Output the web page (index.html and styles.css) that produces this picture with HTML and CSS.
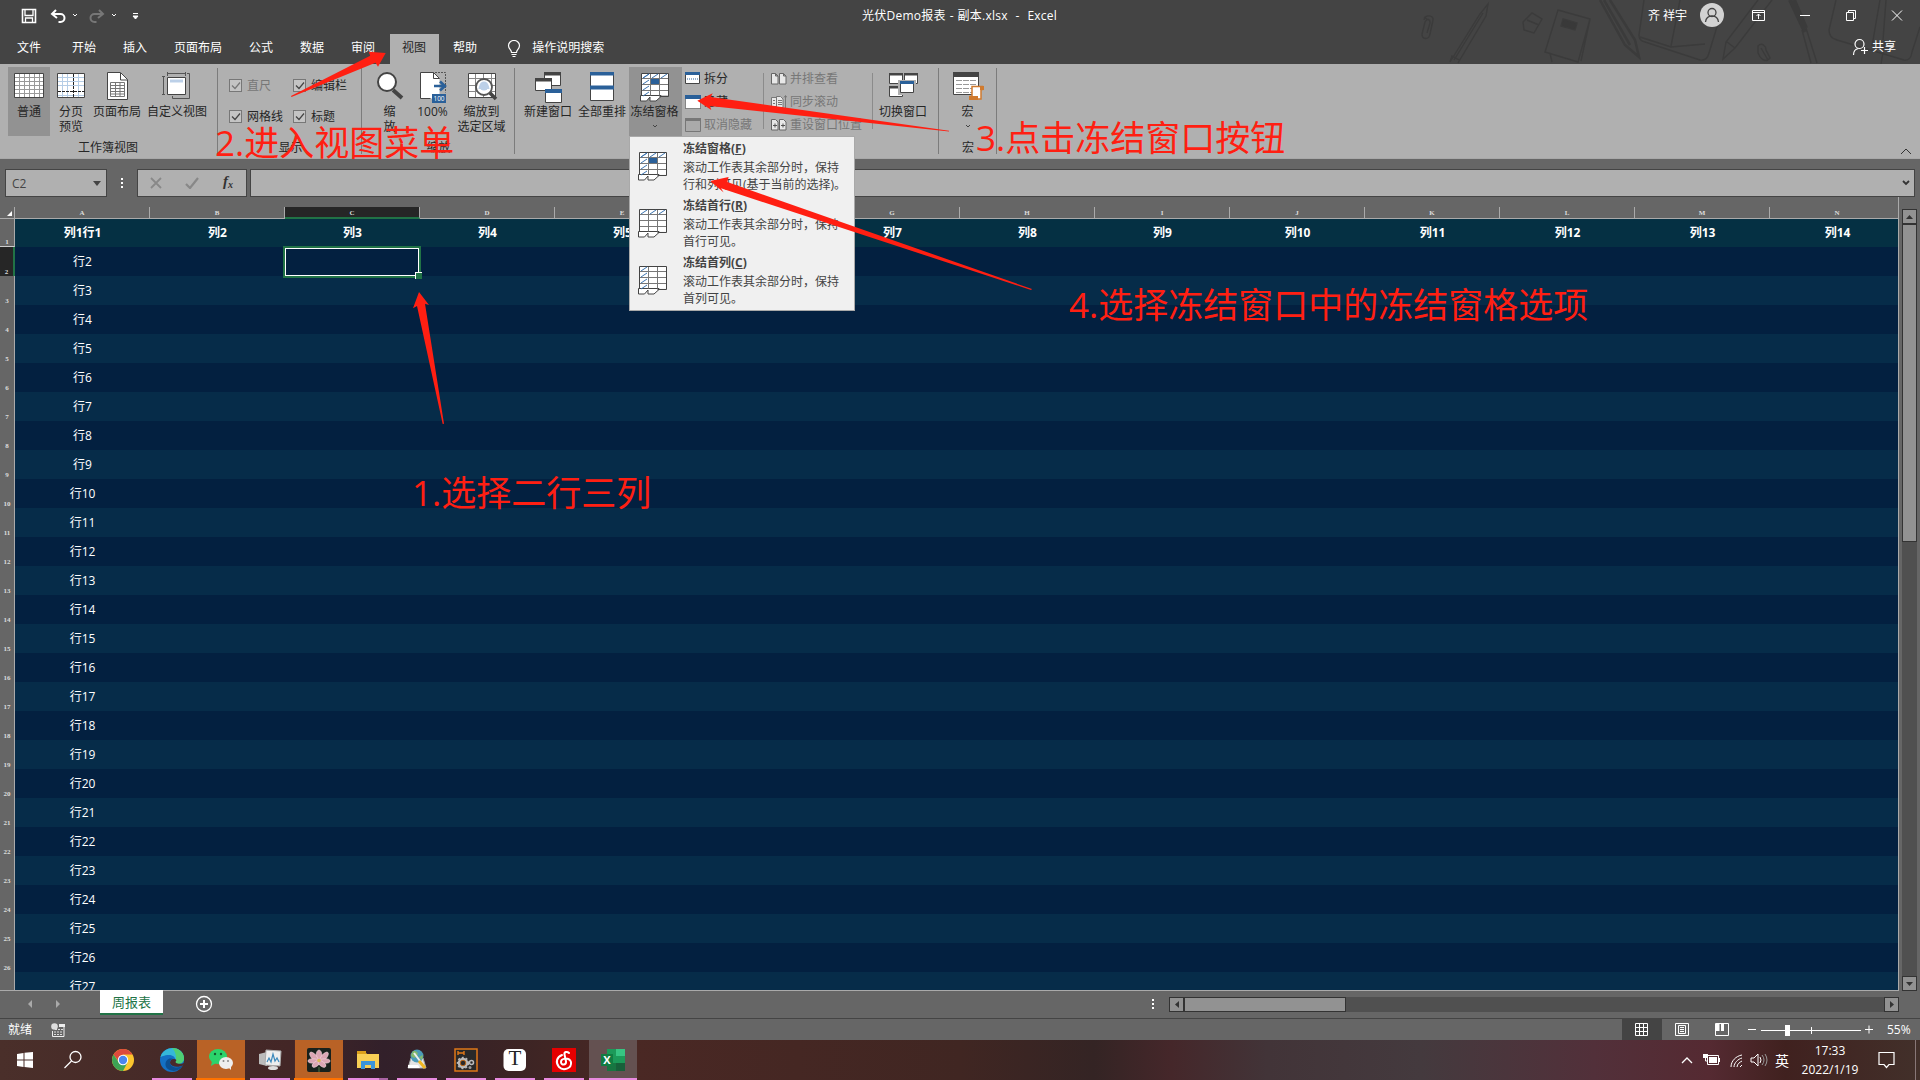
FILE: index.html
```html
<!DOCTYPE html>
<html lang="zh-CN">
<head>
<meta charset="utf-8">
<title>光伏Demo报表 - 副本.xlsx - Excel</title>
<link rel="stylesheet" href="styles.css">
</head>
<body>
<svg width="0" height="0" class="defs">
  <defs>
    <g id="freeze-grid">
      <path d="M1.5 1.5h27v22h-27z" fill="#fff"/>
      <path d="M.500 23.500v5.500h6l3.500-4v4h6l5-4.500v-1z" fill="#fff" stroke="#444" stroke-width="1"/>
      <path d="M1.500 6.500h27M1.500 12.500h27M1.500 18.500h27M10.500 1.500v22M19.500 1.500v22" stroke="#777" fill="none"/>
      <path d="M1.500 1.500h27v23h-9M1.500 1.500v22" stroke="#444" fill="none"/>
    </g>
    <path id="top-hatch" d="M3 6l6-4M12 6l6-4M21 6l6-4" stroke="#3c74b0" fill="none"/>
    <path id="left-hatch" d="M3 6l6-4M3 12l6-4M3 18l6-4M3 24l6-4" stroke="#3c74b0" fill="none"/>
  </defs>
</svg>
<div class="screen">
  <header class="top">
    <svg class="doodles" width="520" height="64" viewBox="1400 0 520 64" fill="none" stroke="#3b3b3b" stroke-width="1.4">
      <path d="M1424 20c1-6 10-5 9 0l-3 14c-1 6-8 6-8 0l3-12c2-4 5-3 5 1l-3 10M1424 17l4 3"/>
      <path d="M1450 62l30-48 8-10-2 12-28 47M1454 60l29-47M1450 62l2-6 7 4"/>
      <path d="M1523 22l9-9 10 6-8 14-10-3zM1527 20l12 5"/>
      <path d="M1558 10l32 9-12 43-33-10zM1590 19l-9 42M1550 53l2 9"/><path d="M1563 19l14 4-2 7-14-4z" fill="#393939"/>
      <path d="M1600 0l25 45 14 12-4-17-25-40M1604 0l26 45" stroke-width="2.500"/>
      <path d="M1644 0l-5 35q0 6 6 7l55 18q7 1 9-7l10-33M1680 0l-9 46M1640 37l31 10 34-3"/>
      <path d="M1758 0l-32 42-3 17 12-11 37-48M1727 42l8 6"/><path d="M1758 46c4-4 8 0 8 4l4 8c-5 6-10 0-12-5zM1761 48l7 12"/>
      <path d="M1790 0l15 32M1794 0l12 28" stroke-width="4"/><path d="M1802 30l9 33M1806 28l11 35M1885 40l-4 24"/>
      <path d="M1836 0l-7 30q0 8 8 10l67 20q7 1 8-8l8-25M1880 0l-8 46M1886 0l-3 40"/>
    </svg>
    <div class="titlebar">
      <div class="quick">
        <svg width="150" height="30" viewBox="0 0 150 30" fill="none" stroke="#fff">
          <path d="M22.500 10.500h13v13h-13z" stroke-width="1.600"/><path d="M25 10.500v6h8v-6M25.500 23v-4h7v4" stroke-width="1.300"/>
          <path d="M56 11l-4 4 5 4M52.500 15h8a4 4 0 010 8h-2" stroke-width="2"/><path d="M73 15l2 2 2-2M112 15l2 2 2-2"/>
          <g stroke="#777"><path d="M99 11l4 4-5 4M102.500 15h-8a4 4 0 000 8h2" stroke-width="2"/></g>
          <path d="M133 14.500h5"/><path d="M133 17l2.500 3 2.500-3z" fill="#fff"/>
        </svg>
      </div>
      <div class="doc-title">光伏Demo报表 - 副本.xlsx&nbsp; -&nbsp; Excel</div>
      <div class="account"><span>齐 祥宇</span>
        <svg width="24" height="24" viewBox="0 0 24 24"><circle cx="12" cy="12" r="12" fill="#d2d2d2"/><circle cx="12" cy="9.500" r="4" fill="none" stroke="#444" stroke-width="1.300"/><path d="M5.500 19c1-8 12-8 13 0" fill="none" stroke="#444" stroke-width="1.300"/></svg>
      </div>
      <svg class="win-controls" width="160" height="30" viewBox="1744 0 160 30" fill="none" stroke="#fff">
        <path d="M1752.500 10.500h12v10h-12zM1752.500 12.500h12M1758.500 19v-5M1756.500 16l2-2 2 2"/>
        <path d="M1800 15.500h10M1846.500 12.500h7v8h-7zM1848.500 12v-1.500h7v8h-1.500M1892 10.500l10 10M1902 10.500l-10 10"/>
      </svg>
    </div>
    <nav class="tabs">
      <a>文件</a><a>开始</a><a>插入</a><a>页面布局</a><a>公式</a><a>数据</a><a>审阅</a><a class="active">视图</a><a>帮助</a>
      <svg class="bulb" width="14" height="18" viewBox="0 0 14 18" fill="none" stroke="#fff" stroke-width="1.200"><path d="M4.500 12.500c0-3-3-3.500-3-7a5.500 5 0 0111 0c0 3.500-3 4-3 7zM4.500 14.500h5M5.500 16.500h3"/></svg>
      <span class="tell">操作说明搜索</span>
      <span class="share"><svg width="17" height="18" viewBox="0 0 17 18" fill="none" stroke="#fff" stroke-width="1.200"><circle cx="7.500" cy="6" r="4.500"/><path d="M1.500 17c0-4 2-6 5-6.500M12.500 9v7M9 12.500h7"/></svg>共享</span>
    </nav>
  </header>

  <section class="ribbon">
    <div class="group g-views">
      <div class="tools">
        <div class="btn pressed w42"><svg width="30" height="30" viewBox="0 0 30 30"><path d="M.500 1.500h29v24H.500z" fill="#fff" stroke="#444"/><path d="M1 5.500h28M1 9.500h28M1 13.500h28M1 17.500h28M1 21.500h28M5.500 2v23M10.500 2v23M15.500 2v23M20.500 2v23M25.500 2v23" stroke="#999" fill="none"/></svg><span>普通</span></div>
        <div class="btn w42"><svg width="30" height="30" viewBox="0 0 30 30"><path d="M1.500 1.500h27v24h-27z" fill="#fff" stroke="#444"/><path d="M2 5.500h26M2 9.500h26M2 13.500h26M2 23.500h26M6.500 2v23M11.500 2v23M22.500 2v23" stroke="#b5cde6" fill="none"/><path d="M17.500 2v24M2 19.500h27" stroke="#222" stroke-dasharray="3 1" fill="none"/></svg><span>分页<br>预览</span></div>
        <div class="btn w50"><svg width="30" height="30" viewBox="0 0 30 30"><path d="M5.500.500h13l7 7v20h-20z" fill="#fff" stroke="#444"/><path d="M18.500 1v7h7" fill="none" stroke="#444"/><path d="M8.500 10.500h14v14h-14zM8.500 13.500h14M8.500 16.500h14M8.500 19.500h14M8.500 22h14M13.500 10v14M18 10v14" fill="none" stroke="#777"/></svg><span>页面布局</span></div>
        <div class="btn w70"><svg width="30" height="30" viewBox="0 0 30 30"><path d="M5.500 5.500h18v17h-18z" fill="#fff" stroke="#444"/><path d="M8 7.500h13v3H8z" fill="#bcd0e8"/><path d="M5.500 0v4M23.500 0v4M6 1.500h17M0 4.500h3M0 22.500h3M1.500 5v17M25 1.500h2.500v25h-17V24" fill="none" stroke="#555"/></svg><span>自定义视图</span></div>
      </div><div class="label">工作簿视图</div>
    </div>
    <div class="group g-show">
      <div class="checks">
        <label class="dim"><i><svg width="13" height="13"><path d="M3 6.500l3 3 5-6" fill="none" stroke="#777" stroke-width="1.200"/></svg></i>直尺</label>
        <label><i><svg width="13" height="13"><path d="M3 6.500l3 3 5-6" fill="none" stroke="#444" stroke-width="1.200"/></svg></i>编辑栏</label>
        <label><i><svg width="13" height="13"><path d="M3 6.500l3 3 5-6" fill="none" stroke="#444" stroke-width="1.200"/></svg></i>网格线</label>
        <label><i><svg width="13" height="13"><path d="M3 6.500l3 3 5-6" fill="none" stroke="#444" stroke-width="1.200"/></svg></i>标题</label>
      </div><div class="label">显示</div>
    </div>
    <div class="group g-zoom">
      <div class="tools">
        <div class="btn w37"><svg width="30" height="30" viewBox="0 0 30 30"><path d="M18 18l9 8" stroke="#444" stroke-width="4"/><circle cx="12" cy="10" r="9" fill="#fff" stroke="#444" stroke-width="2"/></svg><span>缩<br>放</span></div>
        <div class="btn w48"><svg width="30" height="32" viewBox="0 0 30 32"><path d="M2.500.500h13l6 6v20h-19z" fill="#fff"/><path d="M2.500 26.500V.500h13v6h6M15.500.500l6 6M2.500 26.500h10" fill="none" stroke="#444"/><path d="M17 .500h10.500v20" fill="none" stroke="#555" stroke-dasharray="2 1"/><path d="M16 14h10M22 9.500l5 4.500-5 4.500" fill="none" stroke="#2a6099" stroke-width="2.500"/><path d="M14 22h14v9H14z" fill="#2a6099"/><text x="21" y="29" text-anchor="middle" font-size="6.500" fill="#fff">100</text></svg><span>100%</span></div>
        <div class="btn w49"><svg width="30" height="30" viewBox="0 0 30 30"><path d="M1.500 1.500h27v24h-27z" fill="#fff" stroke="#444"/><path d="M2 6.500h26M2 13.500h26M2 19.500h26M8.500 2v23M16.500 2v23M24.500 2v23" stroke="#888"/><path d="M21 19l8 8" stroke="#444" stroke-width="3.500"/><circle cx="17" cy="15" r="8" fill="#fff" stroke="#555" stroke-width="1.800"/><path d="M11.500 17a5.500 6 0 0111 0z" fill="#bcd0e8"/><circle cx="17" cy="14" r="4.500" fill="#bcd0e8"/></svg><span>缩放到<br>选定区域</span></div>
      </div><div class="label">缩放</div>
    </div>
    <div class="group g-window">
      <div class="tools">
        <div class="btn w54"><svg width="30" height="32" viewBox="0 0 30 32"><g fill="#fff" stroke="#444"><path d="M11.500.500h16v13h-16z"/><path d="M2.500 6.500h16v12h-16z"/><path d="M12.500 17.500h16v13h-16z"/></g><path d="M11 0h17v3.500H11zM2 6h17v3.500H2z" fill="#444"/><path d="M12 17h17v4H12z" fill="#2a6099"/></svg><span>新建窗口</span></div>
        <div class="btn w54"><svg width="30" height="30" viewBox="0 0 30 30"><path d="M3.500.500h23v28h-23z" fill="#fff" stroke="#444"/><path d="M3 0h24v3.500H3zM3 13.500h24v4H3z" fill="#2a6099"/></svg><span>全部重排</span></div>
        <div class="btn pressed w53"><svg width="30" height="30" viewBox="0 0 30 30"><use href="#freeze-grid"/><use href="#top-hatch"/><use href="#left-hatch"/><path d="M11 7h8v5h-8z" fill="#2a6099"/></svg><span>冻结窗格</span><svg class="caret" width="6" height="4"><path d="M1 1l2 2 2-2" fill="none" stroke="#444"/></svg></div>
        <div class="smalls s1">
          <div><svg width="16" height="13"><path d="M.500.500h14v11H.500z" fill="#fff" stroke="#444"/><path d="M0 0h15v3H0z" fill="#2a6099"/><path d="M2 7h11" stroke="#2a6099" stroke-dasharray="1 1"/></svg>拆分</div>
          <div><svg width="16" height="14"><path d="M.500.500h15v13H.500z" fill="#fff" stroke="#333" stroke-dasharray="1 1"/><path d="M0 0h16v4H0z" fill="#2a6099"/></svg>隐藏</div>
          <div class="dim"><svg width="16" height="14"><path d="M.500.500h15v13H.500z" fill="#aaa" stroke="#777"/><path d="M0 0h16v3H0z" fill="#777"/></svg>取消隐藏</div>
        </div>
        <div class="smalls s2">
          <div class="dim"><svg width="16" height="12"><path d="M.500.500h4l2.500 2.500v8H.500zM8.500.500h4l2.500 2.500v8H8.500zM4.500.500V3H7M12.500.500V3H15" fill="#e8e8e8" stroke="#666"/></svg>并排查看</div>
          <div class="dim"><svg width="16" height="14"><path d="M.500 2.500h5v9h-5zM5.500 1.500h4l2.500 2.500v8.500H5.500z" fill="#e8e8e8" stroke="#777"/><path d="M7 5.500h4M7 7.500h4M7 9.500h4M2 5.500h2M2 8.500h2M14.500 1v12M13 2.500L14.500.500 16 2.500" stroke="#777" fill="none"/></svg>同步滚动</div>
          <div class="dim"><svg width="16" height="12"><path d="M.500.500h4l2.500 2.500v8H.500zM8.500.500h4l2.500 2.500v8H8.500z" fill="#e8e8e8" stroke="#666"/><path d="M2 6.500h4M4 4.500v4M10 6.500h4M12 4.500v4" stroke="#555"/></svg>重设窗口位置</div>
        </div>
        <div class="btn w60"><svg width="30" height="30" viewBox="0 0 30 30"><g fill="#fff" stroke="#444"><path d="M1.500 1.500h13v10h-13zM16.500 1.500h13v10h-13zM1.500 14.500h13v10h-13z"/></g><path d="M1 1h14v2.500H1zM16 1h14v2.500H16zM1 14h14v2.500H1z" fill="#444"/><path d="M11.500 9.500h15v12h-15z" fill="#fff" stroke="#b0b0b0" stroke-width="3"/><path d="M12.500 9.500h13v11h-13z" fill="#fff" stroke="#444"/><path d="M12 9h14v3H12z" fill="#2a6099"/></svg><span>切换窗口</span></div>
      </div><div class="label"></div>
    </div>
    <div class="group g-macro">
      <div class="tools"><div class="btn w57"><svg width="32" height="30" viewBox="0 0 32 30"><path d="M1.500.500h25v22h-25z" fill="#fff" stroke="#444"/><path d="M1 0h26v5H1z" fill="#444"/><path d="M4 8.500h20M4 12.500h20M4 16.500h20M4 20.500h20" stroke="#999" stroke-dasharray="6 1"/><path d="M20 14.500h10.500v3H29V27H18v-2.500h2z" fill="#fff" stroke="#d07a2e" stroke-width="1.500"/><path d="M17 24h9v4h-9zM28 14h4v4h-4z" fill="#d07a2e"/></svg><span>宏</span><svg class="caret" width="6" height="4"><path d="M1 1l2 2 2-2" fill="none" stroke="#444"/></svg></div></div>
      <div class="label">宏</div>
    </div>
    <svg class="collapse" width="12" height="8"><path d="M1 7l5-5 5 5" fill="none" stroke="#333"/></svg>
  </section>

  <section class="formula">
    <div class="name-box"><span>C2</span><svg width="8" height="5"><path d="M0 0h8L4 5z" fill="#444"/></svg></div>
    <div class="dots"><i></i><i></i><i></i></div>
    <div class="fx-box">
      <svg width="12" height="12"><path d="M1 1l10 10M11 1L1 11" stroke="#888" stroke-width="1.800"/></svg>
      <svg width="14" height="12"><path d="M1 7l4 4 8-10" fill="none" stroke="#888" stroke-width="2.200"/></svg>
      <span>f<sub>x</sub></span>
    </div>
    <div class="input"><svg width="8" height="6"><path d="M1 1l3 3 3-3" fill="none" stroke="#333" stroke-width="1.800"/></svg></div>
  </section>

  <main class="workspace">
    <div class="sheet">
      <div class="cols"><span class="corner"><svg width="5" height="5"><path d="M5 0v5H0z" fill="#fff"/></svg></span><span>A</span><span>B</span><span class="sel">C</span><span>D</span><span>E</span><span>F</span><span>G</span><span>H</span><span>I</span><span>J</span><span>K</span><span>L</span><span>M</span><span>N</span></div>
      <div class="row head"><i>1</i><b>列1行1</b><b>列2</b><b>列3</b><b>列4</b><b>列5</b><b>列6</b><b>列7</b><b>列8</b><b>列9</b><b>列10</b><b>列11</b><b>列12</b><b>列13</b><b>列14</b></div>
      <div class="row cur"><i>2</i><span>行2</span><span></span><span class="active-cell"><em></em></span></div>
      <div class="row"><i>3</i><span>行3</span></div>
      <div class="row"><i>4</i><span>行4</span></div>
      <div class="row"><i>5</i><span>行5</span></div>
      <div class="row"><i>6</i><span>行6</span></div>
      <div class="row"><i>7</i><span>行7</span></div>
      <div class="row"><i>8</i><span>行8</span></div>
      <div class="row"><i>9</i><span>行9</span></div>
      <div class="row"><i>10</i><span>行10</span></div>
      <div class="row"><i>11</i><span>行11</span></div>
      <div class="row"><i>12</i><span>行12</span></div>
      <div class="row"><i>13</i><span>行13</span></div>
      <div class="row"><i>14</i><span>行14</span></div>
      <div class="row"><i>15</i><span>行15</span></div>
      <div class="row"><i>16</i><span>行16</span></div>
      <div class="row"><i>17</i><span>行17</span></div>
      <div class="row"><i>18</i><span>行18</span></div>
      <div class="row"><i>19</i><span>行19</span></div>
      <div class="row"><i>20</i><span>行20</span></div>
      <div class="row"><i>21</i><span>行21</span></div>
      <div class="row"><i>22</i><span>行22</span></div>
      <div class="row"><i>23</i><span>行23</span></div>
      <div class="row"><i>24</i><span>行24</span></div>
      <div class="row"><i>25</i><span>行25</span></div>
      <div class="row"><i>26</i><span>行26</span></div>
      <div class="row last"><i></i><span>行27</span></div>
    </div>
    <div class="vscroll">
      <div class="sbtn"><svg width="7" height="4"><path d="M0 4h7L3.500 0z" fill="#333"/></svg></div>
      <div class="vthumb"></div><div class="vtrack"></div>
      <div class="sbtn"><svg width="7" height="4"><path d="M0 0h7L3.500 4z" fill="#333"/></svg></div>
    </div>
  </main>

  <section class="sheetbar">
    <svg class="nav" width="34" height="8"><path d="M4 0v8L0 4zM28 0v8l4-4z" fill="#aaa"/></svg>
    <div class="sheet-tab">周报表</div>
    <svg class="add" width="18" height="18" fill="none" stroke="#fff"><circle cx="9" cy="9" r="7.500" stroke-width="1.300"/><path d="M5 9h8M9 5v8" stroke-width="2"/></svg>
    <div class="dots"><i></i><i></i><i></i></div>
    <div class="hscroll"><div class="sbtn"><svg width="4" height="7"><path d="M4 0v7L0 3.500z" fill="#333"/></svg></div><div class="hthumb"></div><div class="sbtn end"><svg width="4" height="7"><path d="M0 0v7l4-3.500z" fill="#333"/></svg></div></div>
  </section>

  <section class="status">
    <span class="ready">就绪</span>
    <svg width="14" height="14"><path d="M1.500 8v5.500h11.500v-10" fill="none" stroke="#eee"/><circle cx="3.500" cy="3.500" r="3.300" fill="#ddd"/><path d="M8 1h6v3H8z" fill="#eee"/><path d="M4 6.500h8M3 9h9M3 11.500h9" fill="none" stroke="#ddd" stroke-dasharray="2 1"/></svg>
    <div class="view on"><svg width="14" height="14" fill="none" stroke="#fff"><path d="M.500.500h12v12H.500zM4.500 0v13M8.500 0v13M0 4.500h13M0 8.500h13"/></svg></div>
    <div class="view"><svg width="14" height="14" fill="none" stroke="#fff"><path d="M.500.500h13v12H.500zM3.500 2.500h7v8h-7zM5 4.500h4M5 6.500h4M5 8.500h4"/></svg></div>
    <div class="view"><svg width="14" height="14" fill="none" stroke="#fff"><path d="M.500.500h13v12H.500z"/><path d="M1 1h3.500v7H1zM6 1h3v7H6z" fill="#fff" stroke="none"/></svg></div>
    <svg class="zoom" width="128" height="14" stroke="#fff" fill="none"><path d="M0 6.500h8M13 7.500h100M63.500 4v7M117 6.500h8M121 2.500v8"/><path d="M37 2h5v11h-5z" fill="#fff" stroke="none"/></svg>
    <span>55%</span>
  </section>

  <footer class="taskbar">
    <div class="task"><svg width="24" height="24"><path d="M4 6l6.500-1v6.500H4zM11.500 4.800L20 4v7.500h-8.500zM4 12.500h6.500V19L4 18zM11.500 12.500H20V20l-8.500-1z" fill="#fff"/></svg></div>
    <div class="task"><svg width="24" height="24" fill="none" stroke="#fff" stroke-width="1.300"><circle cx="13.500" cy="9" r="5.500"/><path d="M9.500 13l-7 7"/></svg></div>
    <div class="task"><svg width="24" height="24"><circle cx="12" cy="12" r="11" fill="#fbc52e"/><path d="M2.500 6.500A11 11 0 0121.500 6.500H12L8 14z" fill="#dd4a3c"/><path d="M2.500 6.500A11 11 0 0012 23l4.500-8.500H8z" fill="#3da455"/><circle cx="12" cy="12" r="5.200" fill="#fff"/><circle cx="12" cy="12" r="4.200" fill="#4a86ee"/></svg></div>
    <div class="task run"><svg width="24" height="24"><circle cx="12" cy="12" r="12" fill="#1470c4"/><path d="M.500 9C4-3 23-3 24 10c0 6-6 7-9 5 2-4-1-8-6-8S1 9 .500 9z" fill="#35b8d8"/><path d="M12 0c7 0 12 5 12 10 0 6-6 7-9 5 2-5 1-11-3-15z" fill="#4fcf72"/><path d="M23 17c-4 4-12 3-13-2-.500-2 1-4 3-4-5-2-9 3-7 8 2 4 12 7 17-2z" fill="#0d4f91"/><path d="M14 11c-3 0-4 2-4 4 1 4 8 5 14 2v-2c-5 2-10 0-8-2 1-1 0-2-2-2z" fill="#4a292b"/></svg></div>
    <div class="task alert"><svg width="24" height="24"><ellipse cx="9" cy="8.500" rx="9" ry="7.500" fill="#2bd46b"/><path d="M3 13l-1 5 5-3z" fill="#2bd46b"/><circle cx="6" cy="6" r="1.200" fill="#14592f"/><circle cx="12" cy="6" r="1.200" fill="#14592f"/><ellipse cx="17" cy="15" rx="7" ry="6" fill="#eee"/><path d="M19 19l3 3v-4z" fill="#eee"/><circle cx="14.500" cy="13" r="1" fill="#888"/><circle cx="19" cy="13" r="1" fill="#888"/></svg></div>
    <div class="task run"><svg width="24" height="24"><path d="M1 6l8-2v14l-8-2z" fill="#bbb"/><path d="M8 2l15 1-1 15-15-1z" fill="#eee" stroke="#aaa"/><path d="M9 14l2-4 2 4 2-8 2 7 2-3 2 4" fill="none" stroke="#3b88bb" stroke-width="1.200"/><ellipse cx="15" cy="20" rx="5" ry="2" fill="#ddd"/></svg></div>
    <div class="task alert"><svg width="24" height="24"><rect width="24" height="24" rx="2" fill="#18211c"/><g fill="#dba6b4" stroke="#f3d7dc" stroke-width=".600"><ellipse cx="12" cy="8" rx="3" ry="6"/><ellipse cx="7" cy="9" rx="2.600" ry="6" transform="rotate(-40 7 9)"/><ellipse cx="17" cy="9" rx="2.600" ry="6" transform="rotate(40 17 9)"/><ellipse cx="6" cy="13" rx="5" ry="2.200"/><ellipse cx="18" cy="13" rx="5" ry="2.200"/><ellipse cx="9" cy="16" rx="4.500" ry="2.300" transform="rotate(-35 9 16)"/><ellipse cx="15" cy="16" rx="4.500" ry="2.300" transform="rotate(35 15 16)"/></g><circle cx="12" cy="12.500" r="1.800" fill="#d9b757"/><path d="M12 19v5" stroke="#497642"/></svg></div>
    <div class="task run multi"><svg width="24" height="24"><path d="M1 4h8l2 2h12v14H1z" fill="#f8cf55"/><path d="M1 3h9v3H1z" fill="#dca11c"/><path d="M5 21v-8h14v8h-4v-4H9v4z" fill="#3b94da"/></svg></div>
    <div class="task run"><svg width="24" height="24"><path d="M6 10h12l3 10H3z" fill="#e5e5e5" stroke="#aaa"/><circle cx="12" cy="8" r="6.500" fill="#4b9bb8"/><path d="M8 3c4 0 6 2 4 5S7 10 6 7zM14 9l4-2-1 5z" fill="#84b96c"/><path d="M9 5l9 12" stroke="#eee" stroke-width="2"/><path d="M14 13l6 7" stroke="#f1b622" stroke-width="3"/><path d="M3 17h10l2 3H3z" fill="#fff"/></svg></div>
    <div class="task run"><svg width="24" height="24"><path d="M1 1h22v22H1z" fill="#292929" stroke="#e07818" stroke-width="1.500"/><path d="M4 3v4M10 3v4M4 5h6" stroke="#e07818" stroke-width="1.400"/><circle cx="9" cy="15" r="4" fill="none" stroke="#bbb" stroke-width="2.500"/><circle cx="9" cy="15" r="5.500" fill="none" stroke="#bbb" stroke-width="1.500" stroke-dasharray="2 2"/><circle cx="9" cy="15" r="2.800" fill="#292929" stroke="#e07818" stroke-width=".800"/><circle cx="17.500" cy="14.500" r="2" fill="none" stroke="#bbb" stroke-width="1.500"/><circle cx="16" cy="19.500" r="1.500" fill="#999"/></svg></div>
    <div class="task run"><svg width="24" height="24"><rect x=".500" y="1" width="22.500" height="22" rx="5" fill="#fff"/><text x="12" y="17" text-anchor="middle" class="typora">T</text></svg></div>
    <div class="task run"><svg width="24" height="24"><path d="M0 0h24v24H0z" fill="#e60000"/><path d="M17 5c-2-2-5-1-4.500 1.500l1.500 7c.500 4-5 4-5 .500 0-4 8-5 10 0 1 7-8 9-12 5-4-5-2-10 3-12" fill="none" stroke="#fff" stroke-width="2" stroke-linecap="round"/></svg></div>
    <div class="task run wide"><svg width="24" height="24"><path d="M6 1h18v22H6z" fill="#1c9a59"/><path d="M15 1h9v7h-9z" fill="#37c482"/><path d="M15 15h9v8h-9z" fill="#17603a"/><path d="M6 15h9v8H6z" fill="#187541"/><path d="M0 6h12v12H0z" fill="#127c42"/><text x="6" y="16" text-anchor="middle" class="xl">X</text></svg></div>
    <div class="tray">
      <svg width="98" height="20" viewBox="1680 1050 98 20" fill="none" stroke="#fff"><path d="M1683 1063l5-5 5 5" stroke-width="1.300"/><path d="M1708.500 1055.500h11v9h-11zM1720.500 1058v4"/><path d="M1710 1057h8v6h-8zM1704 1054h5v4h-5z" fill="#fff" stroke="none"/><path d="M1706.500 1058v3h2"/><path d="M1732 1067c0-6 5-11 11-12M1735 1067c0-4 4-8 8-9M1738 1067c0-3 3-5 5-6M1741 1067l2-2"/><path d="M1752 1058h3l4-4v12l-4-4h-3zM1761 1057q2 3 0 6"/><path d="M1763 1055q4 5 0 10M1766 1054q4 6 0 12" stroke="#999"/></svg>
      <span class="ime">英</span>
      <div class="clock"><span>17:33</span><span>2022/1/19</span></div>
      <svg class="note" width="18" height="18" fill="none" stroke="#fff" stroke-width="1.200"><path d="M1 1.500h15v12h-5l-2.500 3-2.500-3H1z"/></svg>
      <i class="edge"></i>
    </div>
  </footer>

  <div class="menu">
    <div class="item"><svg width="30" height="30"><use href="#freeze-grid"/><use href="#top-hatch"/><use href="#left-hatch"/><path d="M11 7h8v5h-8z" fill="#2a6099"/></svg><div><b>冻结窗格(<u>F</u>)</b><p>滚动工作表其余部分时，保持<br>行和列可见(基于当前的选择)。</p></div></div>
    <div class="item"><svg width="30" height="30"><use href="#freeze-grid"/><use href="#top-hatch"/></svg><div><b>冻结首行(<u>R</u>)</b><p>滚动工作表其余部分时，保持<br>首行可见。</p></div></div>
    <div class="item"><svg width="30" height="30"><use href="#freeze-grid"/><use href="#left-hatch"/></svg><div><b>冻结首列(<u>C</u>)</b><p>滚动工作表其余部分时，保持<br>首列可见。</p></div></div>
  </div>

  <svg class="arrows" width="1920" height="1080" fill="#ff1f12">
    <path d="M419 292L429 305 425 303.700 444 423.700 442.700 424 417 306 413 308.300z"/>
    <path d="M385.700 53L378 66.700 375.500 62.700 291.500 97 291 96 370.200 55.700 368.600 51.700z"/>
    <path d="M697.300 100.700L712.700 93.300 710.700 97 949 130.700V131.600L710 106 711.300 110z"/>
    <path d="M710.200 181L728.600 177 727.300 182 1032 289 1031 290 721 188.300 723.700 192.500z"/>
  </svg>
  <div class="note-text n1">1.选择二行三列</div>
  <div class="note-text n2">2.进入视图菜单</div>
  <div class="note-text n3">3.点击冻结窗口按钮</div>
  <div class="note-text n4">4.选择冻结窗口中的冻结窗格选项</div>
</div>
</body>
</html>
```
FILE: styles.css
```css
* { box-sizing: border-box; }
body { margin: 0; background: #666; font: 12px/15px "Open Sans", "Noto Sans CJK SC", sans-serif; color: #262626; overflow: hidden; }
svg { display: block; flex: none; }
.defs { position: absolute; }
.screen { position: relative; width: 1920px; height: 1080px; display: flex; flex-direction: column; overflow: hidden; white-space: nowrap; }
i, em { font-style: normal; }

/* title and tabs */
.top { height: 64px; background: #444; color: #fff; position: relative; flex: none; }
.doodles { position: absolute; right: 0; top: 0; }
.titlebar { height: 30px; display: grid; grid-template-columns: 862px 786px 96px 160px; align-items: center; position: relative; }
.quick { margin-top: 3px; }
.quick svg { margin-top: -5px; }
.doc-title { letter-spacing: .25px; word-spacing: .5px; }
.account { display: flex; align-items: center; justify-content: space-between; padding-right: 20px; }
.tabs { position: relative; height: 34px; display: flex; align-items: stretch; padding-left: 4px; }
.tabs a { padding: 0 13px; margin-right: 1px; margin-top: 4px; line-height: 28px; height: 30px; }
.tabs a:first-child { margin-right: 5px; }
.tabs a.active { background: #b0b0b0; color: #262626; width: 49px; padding-left: 12px; margin: 4px 1px 0; }
.bulb { margin: 10px 11px 0 16px; }
.tell { line-height: 34px; margin-top: 1px; }
.share { margin-left: auto; display: flex; align-items: center; gap: 3px; padding-right: 24px; line-height: 34px; }

/* ribbon */
.ribbon { height: 95px; flex: none; background: #b0b0b0; display: flex; position: relative; border-bottom: 1px solid #a8a8a8; }
.group { height: 95px; padding-top: 3px; position: relative; display: flex; flex-direction: column; }
.group::after { content: ""; position: absolute; right: 0; top: 4px; height: 86px; width: 1px; background: #7c7c7c; }
.g-views { width: 218px; padding-left: 8px; }
.g-show { width: 144px; }
.g-zoom { width: 153px; padding-left: 9px; }
.g-window { width: 424px; padding-left: 6px; }
.g-macro { width: 58px; }
.tools { display: flex; height: 69px; }
.label { text-align: center; height: 22px; line-height: 23px; }
.g-views .label { margin-left: -10px; }
.g-zoom .label { margin-left: -9px; }
.g-show .label { padding-left: 1px; }
.btn { display: flex; flex-direction: column; align-items: center; padding-top: 5px; text-align: center; flex: none; }
.btn > svg:first-child { height: 32px; overflow: visible; margin-bottom: 0; }
.btn > svg[height="30"]:first-child { height: 30px; margin-bottom: 2px; }
.btn.pressed { background: #929292; }
.btn.w53 { padding-right: 2px; }
.caret { margin-top: 5px; }
.w37 { width: 37px; } .w42 { width: 42px; } .w48 { width: 49px; } .w49 { width: 49px; } .w50 { width: 50px; }
.w53 { width: 53px; } .w54 { width: 54px; } .w57 { width: 57px; } .w60 { width: 60px; } .w70 { width: 70px; }
.dim { color: #777; }
.checks { height: 69px; display: grid; grid-template-columns: 64px 70px; grid-template-rows: 31px 31px; padding: 3px 0 0 11px; }
.checks label { display: flex; align-items: center; gap: 5px; }
.checks i { width: 13px; height: 13px; border: 1px solid #777; background: #c4c4c4; }
.checks i svg { margin: -1px; }
.smalls { display: grid; grid-template-rows: 23px 23px 23px; }
.smalls div { display: flex; align-items: center; }
.s1 { width: 81px; padding-left: 3px; }
.s1 div { gap: 3px; }
.s2 { width: 110px; padding-left: 7px; border: solid #8b8b8b; border-width: 0 1px; height: 56px; margin-top: 6px; }
.s2 div { gap: 3px; position: relative; top: -6px; }
.collapse { margin: 83px 8px 0 auto; }

/* formula bar */
.formula { height: 38px; flex: none; padding-top: 10px; display: flex; }
.formula > div:not(.dots) { height: 28px; border: 1px solid #444; background: #b0b0b0; display: flex; align-items: center; }
.name-box { width: 102px; margin-left: 5px; justify-content: space-between; padding: 0 5px 0 6px; color: #444; }
.dots { width: 30px; display: flex; flex-direction: column; gap: 2px; align-items: center; justify-content: center; height: 28px; }
.dots i { width: 2px; height: 2px; background: #fff; }
.fx-box { width: 110px; padding-left: 12px; gap: 23px; }
.fx-box span { font: italic bold 15px/18px "Liberation Serif", serif; color: #333; margin-left: 1px; }
.fx-box sub { font-size: 10px; vertical-align: -2px; }
.input { width: 1665px; margin-left: 3px; justify-content: flex-end; padding-right: 4px; }

/* sheet */
.workspace { height: 794px; flex: none; display: flex; }
.sheet { width: 1899px; height: 794px; overflow: hidden; border-right: 1px solid #aaa; border-bottom: 1px solid #aaa; padding-top: 10px; }
.cols, .row { display: grid; grid-template-columns: 15px repeat(14, 135px); width: 1905px; }
.cols { height: 12px; font: bold 7px/13px "Liberation Serif", serif; color: #ddd; border-bottom: 1px solid #aaa; }
.cols span { text-align: center; border-right: 1px solid #aaa; height: 11px; }
.cols .corner { padding: 4px 0 0 7px; }
.cols .sel { background: #262626; height: 12px; border-bottom: 2px solid #217346; }
.row { height: 29px; background: #062c49; color: #fff; text-align: center; line-height: 30px; }
.row:nth-child(odd) { background: #032040; }
.row.head { background: #053043; height: 28px; line-height: 28px; }
.row i { background: #666; border-right: 1px solid #aaa; border-bottom: 1px solid #ccc; font: bold 7px/7px "Liberation Serif", serif; color: #ddd; display: flex; align-items: flex-end; justify-content: center; }
.row.cur i { background: #262626; border-right: 2px solid #217346; }
.row.last i { border-bottom: 0; }
.active-cell { position: relative; }
.active-cell em { position: absolute; left: -2px; top: -1px; width: 138px; height: 32px; border: 2px solid #217346; }
.active-cell em::before { content: ""; position: absolute; inset: 0; border: 1px solid #fff; }
.active-cell em::after { content: ""; position: absolute; right: -3px; bottom: -3px; width: 6px; height: 6px; background: #217346; border: solid #fff; border-width: 1px 0 0 1px; }
.vscroll { margin: 12px 0 0 3px; width: 15px; height: 782px; display: flex; flex-direction: column; background: #505050; }
.sbtn { width: 15px; height: 15px; flex: none; border: 1px solid #333; background: #929292; display: flex; align-items: center; justify-content: center; }
.vthumb { height: 318px; background: #929292; border: 1px solid #333; }
.vtrack { flex: 1; }

/* sheet tabs */
.sheetbar { height: 27px; flex: none; display: flex; }
.nav { margin: 9px 0 0 28px; }
.sheet-tab { margin-left: 38px; width: 63px; height: 25px; margin-top: -1px; background: #fff; color: #217346; border-bottom: 2px solid #217346; font-size: 13px; line-height: 24px; text-align: center; z-index: 1; }
.add { margin: 4px 0 0 32px; }
.sheetbar .dots { margin-left: 925px; height: 26px; }
.hscroll { width: 730px; height: 15px; margin: 6px 0 0 1px; background: #505050; display: flex; }
.hthumb { width: 162px; border: 1px solid #333; background: #929292; }
.end { margin-left: auto; }

.status { height: 22px; flex: none; border-top: 1px solid #444; display: flex; align-items: center; color: #fff; padding-left: 8px; }
.ready { width: 43px; }
.view { width: 40px; height: 21px; display: flex; align-items: center; justify-content: center; }
.view.on { margin-left: auto; background: #444; }
.zoom { margin: 0 11px 0 6px; }
.status span:last-child { width: 33px; }

/* taskbar */
.taskbar { height: 40px; flex: none; display: flex; color: #fff; background: linear-gradient(90deg, #4a2f2a 0, #432626 15%, #32202a 20%, #3c2424 27%, #4a2824 33%, #402622 50%, #342424 57%, #45272a 61%, #423438 66%, #443a3e 74%, #52303a 83%, #552a32 89%, #40211f 93%, #42302a 100%); }
.task { width: 49px; height: 40px; display: flex; align-items: center; justify-content: center; position: relative; }
.task.run::after { content: ""; position: absolute; left: 5px; right: 4px; bottom: 0; height: 2px; background: #e88adf; }
.task.multi::after { border-right: 9px solid #a964a3; }
.task.alert { background: #b96226; border-bottom: 2px solid #ff7200; box-shadow: inset 1px 0 #46282a; padding-top: 2px; }
.task.wide { background: #645151; margin-left: 1px; width: 48px; }
.task.wide::after { left: 0; right: 0; }
.typora { font: 21px "Liberation Serif", serif; fill: #222; }
.xl { font: bold 11px "Open Sans", sans-serif; fill: #fff; }
.tray { margin-left: auto; display: flex; align-items: center; }
.ime { font-size: 14px; margin-left: -2px; }
.clock { width: 82px; display: flex; flex-direction: column; text-align: center; line-height: 19px; margin-top: -1px; }
.note { margin-left: 7px; }
.edge { width: 1px; height: 40px; background: #877; margin: 0 4px 0 19px; }

/* dropdown */
.menu { position: absolute; left: 629px; top: 136px; width: 226px; height: 175px; background: #f0f0f0; border: 1px solid #a9a9a9; padding-top: 3px; color: #444; }
.item { height: 57px; display: flex; gap: 15px; padding-left: 8px; }
.item svg { margin-top: 11px; }
.item b { display: block; line-height: 18px; }
.item p { margin: 1px 0 0; line-height: 17px; }

/* annotations */
.arrows { position: absolute; left: 0; top: 0; }
.note-text { position: absolute; color: #ff1f12; font-size: 35px; line-height: 50px; }
.n1 { left: 412px; top: 468px; }
.n2 { left: 215px; top: 118px; }
.n3 { left: 976px; top: 113px; }
.n4 { left: 1069px; top: 280px; }
```
